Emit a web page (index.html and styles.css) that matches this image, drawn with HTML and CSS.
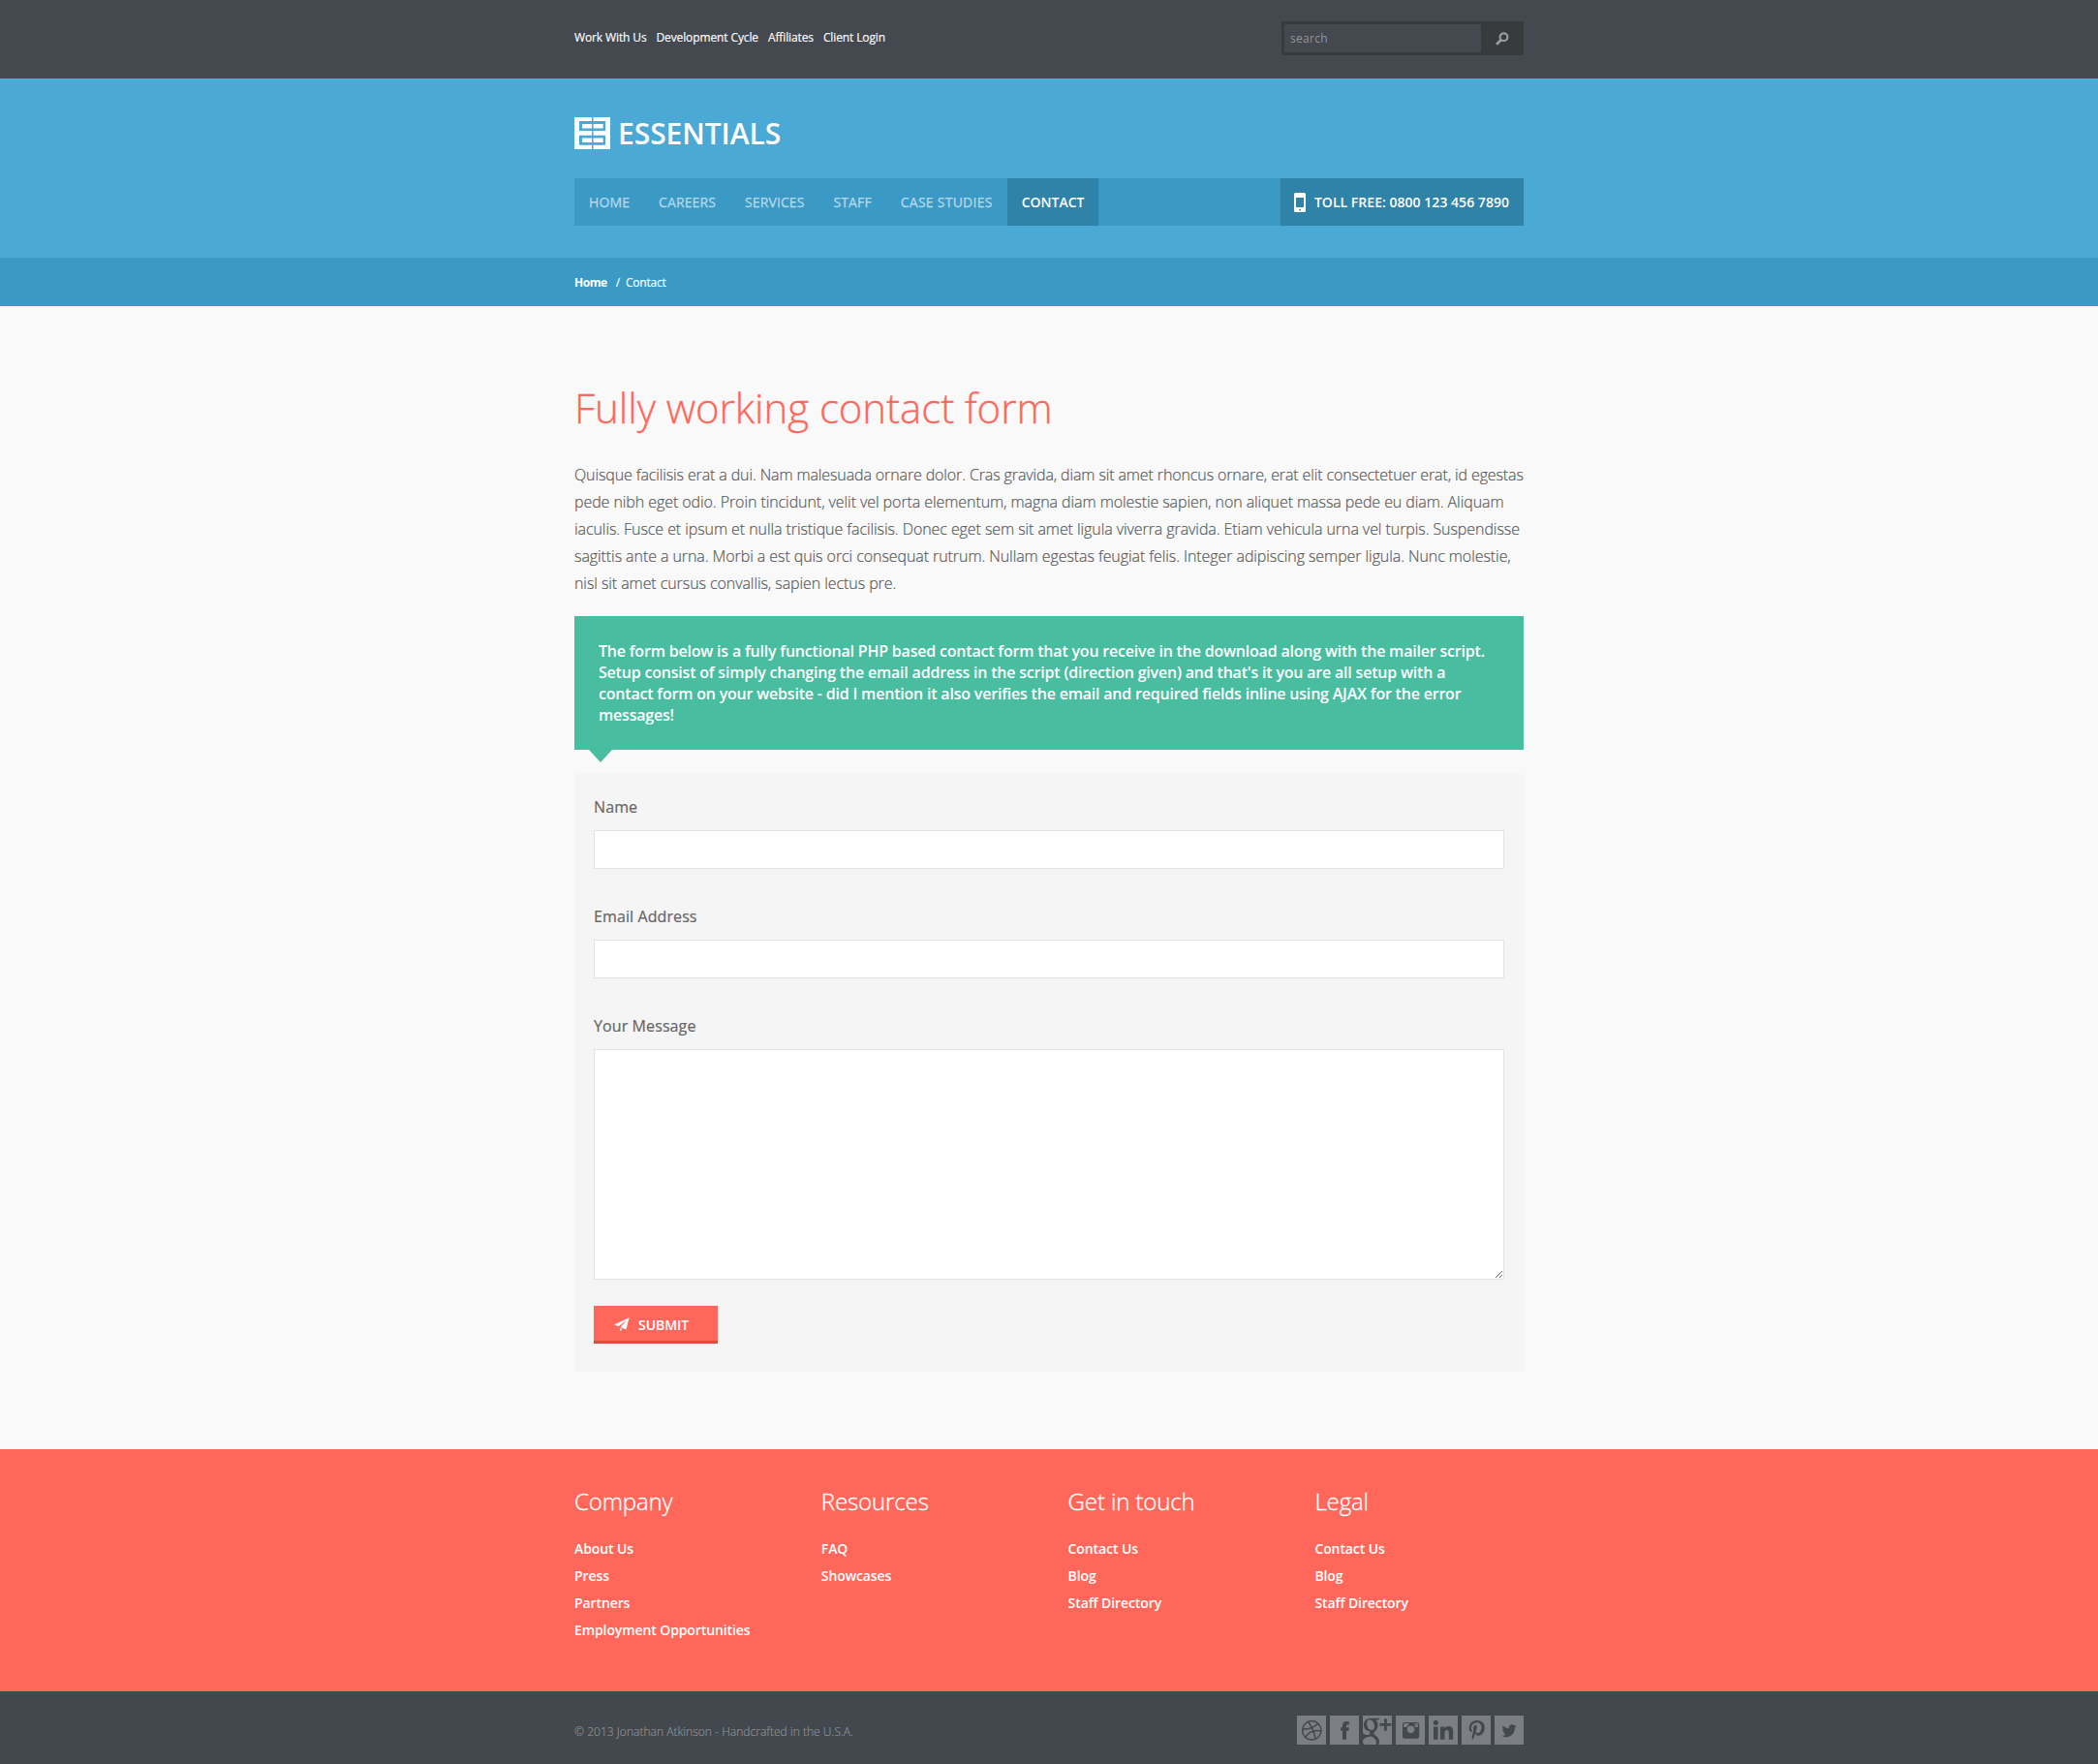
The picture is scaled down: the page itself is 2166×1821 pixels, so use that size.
FILE: index.html
```html
<!DOCTYPE html>
<html lang="en">
<head>
<meta charset="utf-8">
<title>Essentials - Contact</title>
<link rel="stylesheet" href="styles.css">
</head>
<body>
<div class="topbar">
  <div class="container topbar-inner">
    <ul class="top-links">
      <li><a href="#">Work With Us</a></li>
      <li><a href="#">Development Cycle</a></li>
      <li><a href="#">Affiliates</a></li>
      <li><a href="#">Client Login</a></li>
    </ul>
    <form class="search">
      <input class="search-input" type="text" placeholder="search">
      <button class="search-button" type="button" aria-label="Search">
        <svg width="14" height="14" viewBox="0 0 14 14"><circle cx="8.5" cy="5.3" r="3.9" fill="none" stroke="#97999c" stroke-width="2.2"/><path d="M5.4 8.4 1.9 12" stroke="#97999c" stroke-width="2.8" stroke-linecap="round"/></svg>
      </button>
    </form>
  </div>
</div>

<header class="header">
  <div class="container">
    <a class="logo" href="#">
      <svg width="37" height="33" viewBox="0 0 37 33"><path fill="#fff" d="M0 0H18V4H5V14H18V18.700H5V28.700H18V33H0ZM19.500 0H37V33H19.500V28.700H32V18.700H19.500V14H32V4H19.500ZM8 7H18V11.500H8ZM19.500 7H29.700V11.500H19.500ZM8 21.500H18V26H8ZM19.500 21.500H29.700V26H19.500Z"/></svg>
      <span>ESSENTIALS</span>
    </a>
    <nav class="nav">
      <a href="#">HOME</a>
      <a href="#">CAREERS</a>
      <a href="#">SERVICES</a>
      <a href="#">STAFF</a>
      <a href="#" class="wide">CASE STUDIES</a>
      <a href="#" class="active">CONTACT</a>
      <span class="phone">
        <svg width="12" height="20" viewBox="0 0 12 20"><path fill="#fff" fill-rule="evenodd" d="M1.500 0H10.500Q12 0 12 1.500V18.500Q12 20 10.500 20H1.500Q0 20 0 18.500V1.500Q0 0 1.500 0ZM2 5V15H10V5Z"/><rect x="5.300" y="16.800" width="1.600" height="1.600" fill="#2f82a8"/></svg>
        TOLL FREE: 0800 123 456 7890
      </span>
    </nav>
  </div>
</header>

<div class="breadcrumb">
  <div class="container breadcrumb-inner">
    <a href="#">Home</a><span class="slash">/</span><span>Contact</span>
  </div>
</div>

<main class="container main">
  <h1>Fully working contact form</h1>
  <p class="intro">Quisque facilisis erat a dui. Nam malesuada ornare dolor. Cras gravida, diam sit amet rhoncus ornare, erat elit consectetuer erat, id egestas pede nibh eget odio. Proin tincidunt, velit vel porta elementum, magna diam molestie sapien, non aliquet massa pede eu diam. Aliquam iaculis. Fusce et ipsum et nulla tristique facilisis. Donec eget sem sit amet ligula viverra gravida. Etiam vehicula urna vel turpis. Suspendisse sagittis ante a urna. Morbi a est quis orci consequat rutrum. Nullam egestas feugiat felis. Integer adipiscing semper ligula. Nunc molestie, nisl sit amet cursus convallis, sapien lectus pre.</p>
  <div class="notice">The form below is a fully functional PHP based contact form that you receive in the download along with the mailer script. Setup consist of simply changing the email address in the script (direction given) and that's it you are all setup with a contact form on your website - did I mention it also verifies the email and required fields inline using AJAX for the error messages!</div>
  <form class="contact-form">
    <label for="name">Name</label>
    <input id="name" type="text">
    <label for="email">Email Address</label>
    <input id="email" type="text">
    <label for="message">Your Message</label>
    <textarea id="message"></textarea>
    <button class="submit" type="button">
      <svg width="16" height="15" viewBox="0 0 16 15"><path fill="#fff" d="M15.500.2 0 7.600 4.600 9.200 13.300 2.600 6.600 10.100 12.400 12.400ZM6.200 10.900V14.600L8.300 11.800Z"/></svg>
      SUBMIT
    </button>
  </form>
</main>

<footer class="footer">
  <div class="container footer-grid">
    <section>
      <h2>Company</h2>
      <ul>
        <li><a href="#">About Us</a></li>
        <li><a href="#">Press</a></li>
        <li><a href="#">Partners</a></li>
        <li><a href="#">Employment Opportunities</a></li>
      </ul>
    </section>
    <section>
      <h2>Resources</h2>
      <ul>
        <li><a href="#">FAQ</a></li>
        <li><a href="#">Showcases</a></li>
      </ul>
    </section>
    <section>
      <h2>Get in touch</h2>
      <ul>
        <li><a href="#">Contact Us</a></li>
        <li><a href="#">Blog</a></li>
        <li><a href="#">Staff Directory</a></li>
      </ul>
    </section>
    <section>
      <h2>Legal</h2>
      <ul>
        <li><a href="#">Contact Us</a></li>
        <li><a href="#">Blog</a></li>
        <li><a href="#">Staff Directory</a></li>
      </ul>
    </section>
  </div>
</footer>

<div class="bottom">
  <div class="container bottom-inner">
    <p>© 2013 Jonathan Atkinson - Handcrafted in the U.S.A.</p>
    <div class="social">
      <a href="#" aria-label="Dribbble"><svg viewBox="0 0 30 30"><g fill="none" stroke="#43484e" stroke-width="1.500"><circle cx="15.300" cy="15.300" r="9.700"/><path d="M11.500 6.500Q17.300 13.500 19 24.200M5.700 14Q15.500 14.400 21.800 8.200M8.700 22.300Q14.500 13.600 25 16"/></g></svg></a>
      <a href="#" aria-label="Facebook"><svg viewBox="0 0 30 30"><path fill="#43484e" d="M13 24.700V15.800H11.200V12.300H13V10.200C13 7.400 14.400 6 17.200 6H19.700V9.500H18C17.200 9.500 17 9.900 17 10.600V12.300H19.700L19.400 15.800H17V24.700Z"/></svg></a>
      <a href="#" aria-label="Google Plus"><svg viewBox="0 0 30 30"><path fill="#43484e" fill-rule="evenodd" d="M17.200 2.700H7.500C3.500 3 .9 6 .9 9.600C.9 13.200 3.400 16.200 7.400 16.300C6.600 17.700 6.800 18.800 7.800 19.600C4.800 19.700 1.800 20.200-.5 21.700V33H13C15.300 32 17.200 29.500 17 26.500C16.700 23.400 14.800 21.800 12.800 20.300C10.900 18.800 10.800 18 12 16.900C13.700 15.300 15.600 13.300 15.500 9.600C15.400 7.300 14.500 5.700 13.300 4.400H16.300ZM7 4.200C9.800 4.200 11.500 6.900 11.900 9.900C12.300 13 11.100 15 8.900 15C6.300 15 4.600 12.200 4.200 9.300C3.800 6.500 4.900 4.300 7 4.200ZM-.5 26.500C1.200 23 5 21.400 8.800 21.400C11.800 23.200 13.900 24.900 13.900 27.700C13.900 31.500 10 33 6 32.500C3 32 .6 29.500-.5 26.500ZM22 3.300H24.800V8.100H29.300V10.800H24.800V15.800H22V10.800H17.400V8.100H22Z"/><path fill="#43484e" d="M0 18V24L4 21Z"/></svg></a>
      <a href="#" aria-label="Instagram"><svg viewBox="0 0 30 30"><path fill="#43484e" fill-rule="evenodd" d="M9.200 7H22Q24.200 7 24.200 9.200V21.500Q24.200 23.800 22 23.800H9.200Q7 23.800 7 21.500V9.200Q7 7 9.200 7ZM8.300 8.500V12H11.200Q12 10.200 13.500 9.400V8H9.200ZM19.500 8.200V10.900Q20 11.400 20.300 12H23V8.200ZM15.600 10.400A3.800 3.800 0 1 0 15.600 18A3.800 3.800 0 1 0 15.600 10.400Z"/><rect x="20.600" y="9" width="1.600" height="1.600" fill="#5c6065"/></svg></a>
      <a href="#" aria-label="LinkedIn"><svg viewBox="0 0 30 30"><g fill="#43484e"><circle cx="7.300" cy="7.300" r="2.600"/><path d="M5 11.500H9.500V24.800H5ZM12 11.500H16.300V13.300C17.300 11.900 18.700 11.100 20.500 11.100C23.800 11.100 25.200 13.200 25.200 17V24.800H20.800V17.800C20.800 16 20.300 14.900 18.800 14.900C17.300 14.900 16.500 16 16.500 17.800V24.800H12Z"/></g></svg></a>
      <a href="#" aria-label="Pinterest"><svg viewBox="0 0 30 30"><path fill="#43484e" d="M14 18.300C13.400 21.100 12.700 23.800 10.900 25.200C10.300 21.200 11.700 18.200 12.400 15C11.300 13 12.600 9.100 15 10.100C18 11.300 12.400 17.300 16.200 18C20.100 18.800 21.700 11.200 19.300 8.700C15.800 5.200 9.200 8.600 10 13.700C10.200 14.900 11.500 15.300 10.500 17.100C8.300 16.600 7.500 14.800 7.600 12.500C7.800 8.600 11 5.400 14.500 5C19 4.500 23.200 6.700 23.700 11C24.300 15.900 21.600 21.200 16.800 20.800C15.500 20.700 14.900 20 14 18.300Z"/></svg></a>
      <a href="#" aria-label="Twitter"><svg viewBox="0 0 30 30"><path fill="#43484e" d="M22.500 10.900 20.900 12.600C21.100 18 17.300 22.200 12.400 22.200C10.600 22.200 9 21.700 7.600 20.700C9.300 20.800 10.800 20.400 12.100 19.500C10.700 19.400 9.700 18.600 9.300 17.400H10.600C9.100 16.900 8.200 15.800 8.100 14.300L9.500 14.600C8.200 13.500 7.700 11.900 8.600 10.200C10.200 12 12.200 13 14.900 13.200C14.400 11.100 15.900 9.300 18 9.300C18.900 9.300 19.600 9.700 20.200 10.300L22.100 9.500 21 11.200Z"/></svg></a>
    </div>
  </div>
</div>
</body>
</html>
```
FILE: styles.css
```css
* { box-sizing: border-box; }
body {
  margin: 0;
  background: #f9f9f9;
  color: #666;
  font-family: "Open Sans", "Noto Sans", sans-serif;
  font-size: 16px;
}
a { color: inherit; text-decoration: none; }
ul { list-style: none; margin: 0; padding: 0; }
svg { display: block; }
.container { width: 980px; margin: 0 auto; }

.topbar { height: 81px; background: #44484f; }
.topbar-inner { display: flex; justify-content: space-between; align-items: flex-start; padding-top: 22px; }
.top-links { display: flex; gap: 10px; padding-top: 5px; color: #fff; font-size: 12px; line-height: 24px; letter-spacing: -0.12px; -webkit-text-stroke: 0.15px; }
.search { display: flex; width: 250px; height: 35px; padding: 3px 0 3px 3px; background: #373b3e; }
.search-input {
  width: 203px; height: 29px; padding: 0 6px; border: 0;
  background: #44484f; color: #8b8c8f;
  font: 12px "Open Sans", sans-serif; letter-spacing: 0.3px;
}
.search-input::placeholder { color: #949598; }
.search-button { flex: 1; padding: 0 0 0 15px; border: 0; background: none; }

.header { height: 185px; padding-top: 40px; background: #4aa9d5; }
.logo { display: flex; height: 33px; gap: 8px; color: #fff; font-size: 30px; font-weight: 600; line-height: 34px; letter-spacing: -0.05px; }
.nav { display: flex; height: 49px; margin-top: 30px; background: #3a99c5; color: #b4dbed; font-size: 14px; line-height: 49px; }
.nav a { padding: 0 15px; letter-spacing: 0.11px; -webkit-text-stroke: 0.25px; }
.nav .wide { letter-spacing: 0.25px; }
.nav .active { background: #2f82a8; color: #fff; font-weight: 600; letter-spacing: 0; -webkit-text-stroke: 0; }
.phone { display: flex; align-items: center; gap: 9px; margin-left: auto; padding: 0 15px 0 14px; background: #2f82a8; color: #fff; font-weight: 600; letter-spacing: 0.03px; }

.breadcrumb { height: 50px; background: #3a99c5; color: #fff; font-size: 12px; line-height: 51px; letter-spacing: -0.2px; -webkit-text-stroke: 0.15px; }
.breadcrumb-inner { display: flex; }
.breadcrumb a { font-weight: 700; letter-spacing: -0.45px; -webkit-text-stroke: 0; }
.slash { margin: 0 6px 0 9px; }

.main { height: 1180px; padding-top: 75px; }
h1 { margin: 0 0 25px; color: #ff675b; font-size: 42px; font-weight: 300; line-height: 60px; letter-spacing: -0.06px; -webkit-text-stroke: 0.3px; }
.intro { margin: 0 0 20px; color: #5a5a5a; font-weight: 300; line-height: 28px; letter-spacing: -0.075px; -webkit-text-stroke: 0.2px; }
.intro::first-line { letter-spacing: -0.12px; }
.notice { position: relative; padding: 25px; background: #48bd9f; color: #fff; font-weight: 600; line-height: 22px; letter-spacing: -0.2px; }
.notice::after { content: ""; position: absolute; left: 15px; top: 100%; border: solid transparent; border-width: 13px 12px 0; border-top-color: #48bd9f; }
.contact-form { display: flex; flex-direction: column; align-items: flex-start; width: 981px; height: 617px; margin-top: 25px; padding: 20px 21px 0 20px; background: #f5f5f5; }
.contact-form label { margin-bottom: 10px; line-height: 28px; letter-spacing: 0.1px; -webkit-text-stroke: 0.2px #666; }
.contact-form input, .contact-form textarea { width: 100%; border: 1px solid #e3e3df; background: #fff; }
.contact-form input { height: 40px; margin-bottom: 35px; }
.contact-form textarea { height: 238px; }
.submit { display: flex; align-items: center; gap: 9px; width: 128px; height: 39px; margin-top: 27px; padding: 2px 0 0 21px; border: 0; border-bottom: 3px solid #df4e3d; background: #ff675b; color: #fff; font: 600 14px "Open Sans", sans-serif; letter-spacing: -0.05px; }

.footer { height: 250px; background: #ff675b; color: #fff; }
.footer-grid { display: grid; grid-template-columns: repeat(4, 22%); justify-content: space-between; padding-top: 34px; }
.footer h2 { margin: 0 0 16px; font-size: 24px; font-weight: 300; line-height: 39px; letter-spacing: -0.12px; -webkit-text-stroke: 0.3px; }
.footer li { font-size: 14px; font-weight: 600; line-height: 28px; letter-spacing: -0.1px; white-space: nowrap; }

.bottom { height: 75px; background: #43484e; }
.bottom-inner { display: flex; justify-content: space-between; padding-top: 25px; }
.bottom p { margin: 0; color: #909396; font-size: 12px; font-weight: 300; line-height: 34px; letter-spacing: 0.03px; -webkit-text-stroke: 0.15px; }
.social { display: flex; gap: 4px; }
.social a { width: 30px; height: 30px; background: #7b7e83; }
.social svg { width: 30px; height: 30px; }
```
